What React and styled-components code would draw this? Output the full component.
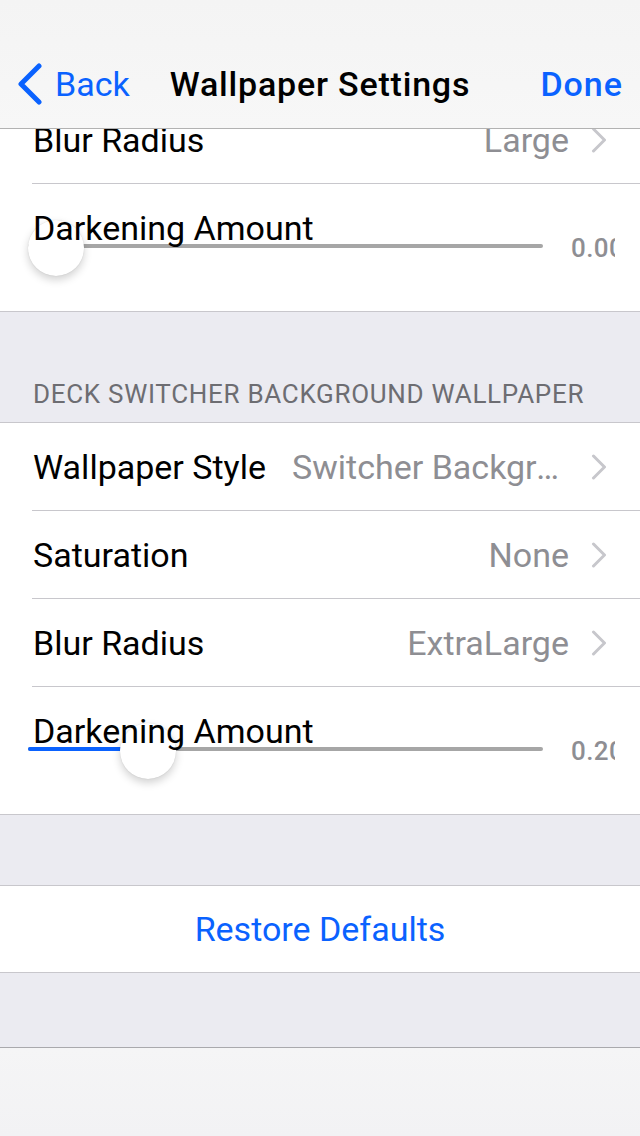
import React from "react";
import styled, { createGlobalStyle } from "styled-components";

const GlobalStyle = createGlobalStyle`
  html, body { margin: 0; padding: 0; }
  body { background: #ebebf1; font-family: Roboto, "Liberation Sans", sans-serif; }
  * { box-sizing: border-box; }
`;

const BLUE = "#0a62ff";
const GRAY_TEXT = "#8e8e93";
const SEP = "#c8c7cc";

const Screen = styled.div`
  position: relative;
  width: 640px;
  height: 1136px;
  overflow: hidden;
  background: #ebebf1;
  font-family: Roboto, "Liberation Sans", sans-serif;
  -webkit-font-smoothing: antialiased;
`;

const NavBar = styled.header`
  position: absolute;
  top: 0;
  left: 0;
  right: 0;
  height: 129px;
  padding-top: 40px;
  background: linear-gradient(180deg, #f4f4f4 0%, #f7f7f7 100%);
  border-bottom: 1px solid #b2b2b2;
  z-index: 5;
`;

const NavContent = styled.div`
  height: 88px;
  display: grid;
  grid-template-columns: 1fr auto 1fr;
  align-items: center;
  padding: 0 17px;
`;

const BackButton = styled.div`
  justify-self: start;
  display: flex;
  align-items: center;
  gap: 12px;
  color: ${BLUE};
  font-size: 34px;
  line-height: 40px;
`;

const Title = styled.div`
  font-size: 34px;
  font-weight: 500;
  color: #000;
  line-height: 40px;
  letter-spacing: 0.8px;
`;

const DoneButton = styled.div`
  justify-self: end;
  color: ${BLUE};
  font-size: 34px;
  font-weight: 500;
  line-height: 40px;
  letter-spacing: 1px;
`;

const Content = styled.main`
  padding-top: 96px;
  display: flex;
  flex-direction: column;
`;

const Group = styled.section`
  background: #fff;
  border-top: ${(p) => (p.$noTop ? "none" : `1px solid ${SEP}`)};
  border-bottom: 1px solid ${SEP};
`;

const Gap = styled.div`
  height: ${(p) => p.$h}px;
  display: flex;
  align-items: flex-end;
`;

const SectionHeader = styled.div`
  padding: 0 0 12px 33px;
  font-size: 26px;
  line-height: 32px;
  color: #6d6d72;
  text-transform: uppercase;
  letter-spacing: 0.7px;
`;

const Row = styled.div`
  padding-left: 32px;
`;

const RowInner = styled.div`
  height: 88px;
  display: flex;
  align-items: center;
  padding-right: 33px;
  border-bottom: ${(p) => (p.$last ? "none" : `1px solid ${SEP}`)};
  font-size: 34px;
  color: #000;
`;

const RowLabel = styled.span`
  flex: none;
  white-space: nowrap;
  padding-left: 1px;
`;

const RowValue = styled.span`
  flex: 1;
  min-width: 0;
  text-align: right;
  color: ${GRAY_TEXT};
  white-space: nowrap;
  overflow: hidden;
  text-overflow: ellipsis;
  margin-left: 26px;
`;

const Chevron = styled.svg`
  flex: none;
  width: 16px;
  height: 26px;
  margin-left: 22px;
`;

const SliderRow = styled.div`
  height: 127px;
  padding: 28px 25px 0 28px;
`;

const SliderLabel = styled.div`
  padding-left: 5px;
  font-size: 34px;
  line-height: 32px;
  color: #000;
  white-space: nowrap;
  position: relative;
  z-index: 1;
`;

const SliderLine = styled.div`
  display: flex;
  align-items: center;
  gap: 28px;
  height: 4px;
`;

const Track = styled.div`
  position: relative;
  flex: 1;
  height: 4px;
  border-radius: 2px;
  background: #a6a6a6;
`;

const Fill = styled.div`
  position: absolute;
  left: 0;
  top: 0;
  bottom: 0;
  border-radius: 2px;
  background: ${BLUE};
`;

const Thumb = styled.div`
  position: absolute;
  top: 50%;
  width: 56px;
  height: 56px;
  margin-top: -26px;
  border-radius: 50%;
  background: #fff;
  box-shadow: 0 4px 9px rgba(0, 0, 0, 0.18), 0 0 1px rgba(0, 0, 0, 0.18);
`;

const ValueBox = styled.div`
  flex: none;
  width: 44px;
  overflow: hidden;
  white-space: nowrap;
  font-size: 26px;
  font-weight: 500;
  letter-spacing: 0.4px;
  color: ${GRAY_TEXT};
  line-height: 30px;
  padding-top: 3px;
`;

const ButtonRow = styled.div`
  height: 86px;
  display: flex;
  align-items: center;
  justify-content: center;
  color: ${BLUE};
  font-size: 34px;
`;

const Toolbar = styled.footer`
  position: absolute;
  left: 0;
  right: 0;
  bottom: 0;
  height: 89px;
  border-top: 1px solid #a9a9ad;
  background: linear-gradient(180deg, #f5f5f6 0%, #f2f2f4 100%);
  z-index: 5;
`;

const DisclosureIcon = () => (
  <Chevron viewBox="0 0 16 26">
    <polyline points="2.5,2 13.5,13 2.5,24" fill="none" stroke="#c7c7cc" strokeWidth="3" strokeLinecap="round" strokeLinejoin="round" />
  </Chevron>
);

const BackIcon = () => (
  <svg width="26" height="42" viewBox="0 0 26 42">
    <polyline points="22,3 4,21 22,39" fill="none" stroke={BLUE} strokeWidth="5" strokeLinecap="round" strokeLinejoin="round" />
  </svg>
);

const DetailRow = ({ label, value, last }) => (
  <Row>
    <RowInner $last={last}>
      <RowLabel>{label}</RowLabel>
      <RowValue>{value}</RowValue>
      <DisclosureIcon />
    </RowInner>
  </Row>
);

const Slider = ({ label, value, display }) => (
  <SliderRow>
    <SliderLabel>{label}</SliderLabel>
    <SliderLine>
      <Track>
        {value > 0 && <Fill style={{ width: `calc((100% - 56px) * ${value} + 28px)` }} />}
        <Thumb style={{ left: `calc((100% - 56px) * ${value})` }} />
      </Track>
      <ValueBox>{display}</ValueBox>
    </SliderLine>
  </SliderRow>
);

export default function App() {
  return (
    <>
      <GlobalStyle />
      <Screen>
        <NavBar>
          <NavContent>
            <BackButton>
              <BackIcon />
              <span>Back</span>
            </BackButton>
            <Title>Wallpaper Settings</Title>
            <DoneButton>Done</DoneButton>
          </NavContent>
        </NavBar>

        <Content>
          <Group $noTop>
            <DetailRow label="Blur Radius" value="Large" />
            <Slider label="Darkening Amount" value={0} display="0.00" />
          </Group>

          <Gap $h={110}>
            <SectionHeader>Deck Switcher Background Wallpaper</SectionHeader>
          </Gap>

          <Group>
            <DetailRow label="Wallpaper Style" value="Switcher Background" />
            <DetailRow label="Saturation" value="None" />
            <DetailRow label="Blur Radius" value="ExtraLarge" />
            <Slider label="Darkening Amount" value={0.2} display="0.20" />
          </Group>

          <Gap $h={70} />

          <Group>
            <ButtonRow>Restore Defaults</ButtonRow>
          </Group>
        </Content>

        <Toolbar />
      </Screen>
    </>
  );
}
